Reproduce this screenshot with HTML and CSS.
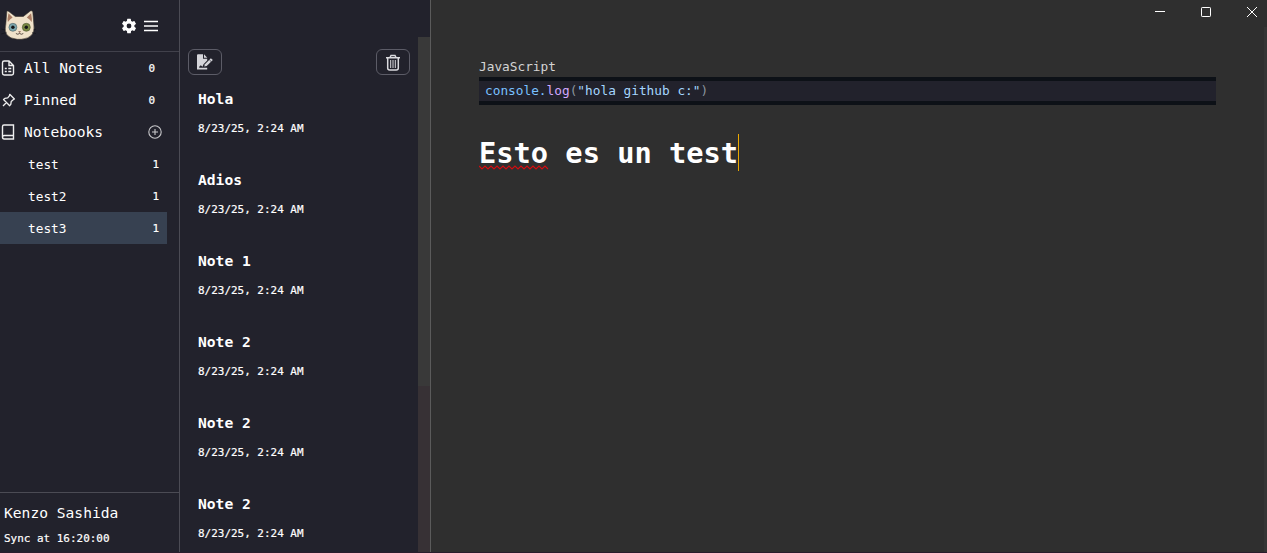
FILE: index.html
```html
<!DOCTYPE html>
<html lang="en">
<head>
<meta charset="utf-8">
<title>Notes</title>
<link rel="stylesheet" href="styles.css">
</head>
<body>
<div class="app">
  <aside class="sidebar">
    <header class="side-head">
      <svg class="logo" width="36" height="32" viewBox="0 0 36 32">
        <g transform="translate(-.7 0)">
        <path d="M6.500 14 L7.500 1.500 Q8 .5 9.500 1.500 L16 6.500 H24 L31 1 Q33 0 33.500 2 L34.500 14 Q37 28 22 29.300 H18 Q3 28 6.500 14Z" fill="#f0e2ca" stroke="#37302b" stroke-width=".6"/>
        <path d="M8.200 9 L9.200 3.300 L13.300 7.500 Q10.500 9 8.600 12Z M32.600 9 L31.800 3.300 L27.500 7.500 Q30.500 9 32.400 12Z" fill="#a97c63"/>
        <circle cx="13.600" cy="17.300" r="4" fill="#7ca7ad" stroke="#4f6264" stroke-width=".6"/>
        <circle cx="27" cy="17.300" r="4" fill="#7b8a42" stroke="#4c5430" stroke-width=".6"/>
        <circle cx="13.600" cy="17.300" r="1.700" fill="#151515"/><circle cx="27" cy="17.300" r="1.700" fill="#151515"/>
        <path d="M18.800 21.300h3L20.300 23Z" fill="#8c5f51"/>
        <path d="M16.600 23.500q2 1.500 3.700 0q1.800 1.500 3.700 0" fill="none" stroke="#3b302b" stroke-width=".8"/>
        <path d="M2 19l4 1M2 24l5-1.500M38 19l-4 1M38 24l-5-1.500" stroke="#111118" stroke-width=".6"/>
        </g>
      </svg>
      <div class="head-icons">
        <svg width="18" height="18" viewBox="0 0 24 24" fill="#fff"><path d="M19.140 12.940c.04-.3.060-.61.060-.94 0-.32-.02-.64-.07-.94l2.030-1.580a.49.490 0 0 0 .12-.61l-1.920-3.320a.49.490 0 0 0-.59-.22l-2.390.96c-.5-.38-1.030-.7-1.620-.94l-.36-2.540a.48.480 0 0 0-.48-.41h-3.840a.48.480 0 0 0-.47.41l-.36 2.540c-.59.240-1.130.57-1.620.94l-2.390-.96a.48.480 0 0 0-.59.220L2.740 8.870a.48.480 0 0 0 .12.610l2.030 1.580a7 7 0 0 0 0 1.880l-2.030 1.580a.49.490 0 0 0-.12.610l1.920 3.320c.12.220.37.290.59.220l2.390-.96c.5.380 1.030.7 1.620.94l.36 2.540c.05.240.24.410.48.410h3.840c.24 0 .44-.17.47-.41l.36-2.540c.59-.24 1.130-.56 1.620-.94l2.390.96c.22.080.47 0 .59-.22l1.920-3.320a.48.480 0 0 0-.12-.61zM12 15.200a3.200 3.200 0 1 1 0-6.400 3.200 3.200 0 0 1 0 6.400z"/></svg>
        <svg width="14" height="12" viewBox="0 0 14 12" stroke="#fff" stroke-width="1.500"><path d="M0 1.500h14M0 6h14M0 10.500h14"/></svg>
      </div>
    </header>
    <nav class="nav">
      <div class="row">
        <svg width="16" height="18" viewBox="0 0 16 18" fill="none" stroke="#eee" stroke-width="1.400"><path d="M9 2H4.200Q2.500 2 2.500 3.700v10.600Q2.500 16 4.200 16h7.600q1.700 0 1.700-1.700V6.500zM9 2v4.500h4.500"/><path d="M4.800 9.500h2m1.500 0h3M4.800 12.500h2m1.500 0h3"/></svg>
        <span>All Notes</span><b class="count">0</b>
      </div>
      <div class="row">
        <svg width="16" height="18" viewBox="0 0 16 18" fill="none" stroke="#eee" stroke-width="1.300" stroke-linejoin="round"><path d="M9.700 3.300l4.700 4.700-1.200.8-2 1.800-.4 2.800-1.100 1.300-6.200-6.200 1.300-1.100 2.900-.5 1.700-2zM6.500 11.500L3 15"/></svg>
        <span>Pinned</span><b class="count">0</b>
      </div>
      <div class="row">
        <svg width="16" height="18" viewBox="0 0 16 18" fill="none" stroke="#eee" stroke-width="1.400"><path d="M13.500 12.500V2H4Q2.500 2 2.500 3.500V14Q2.500 16 4.200 16h9.300v-3.500H4.200Q2.500 12.500 2.500 14.200"/></svg>
        <span>Notebooks</span>
        <svg class="plus" width="14" height="14" viewBox="0 0 14 14" fill="none" stroke="#c8c8cb" stroke-width="1.100"><circle cx="7" cy="7" r="6.200"/><path d="M7 4v6M4 7h6"/></svg>
      </div>
      <div class="row book"><span>test</span><b class="count">1</b></div>
      <div class="row book"><span>test2</span><b class="count">1</b></div>
      <div class="row book active"><span>test3</span><b class="count">1</b></div>
    </nav>
    <footer class="user"><div class="name">Kenzo Sashida</div><div class="sync">Sync at 16:20:00</div></footer>
  </aside>
  <section class="notes">
    <div class="notes-body">
      <div class="tools">
        <button class="tool"><svg width="18" height="16" viewBox="0 0 18 16"><path d="M1 1.200Q1 .3 2 .3h5v4.400h4.200v1.800L7.500 10.300l-1 2.500-1.700-1.500-1.600 1.500v1h8v1.800H1z" fill="#d5d5da"/><path d="M8 .3l3.300 3.500H8z" fill="#d5d5da"/><path d="M8.200 12.500l.7-2.300 6-6 1.900 1.700-6.100 6z" fill="#d5d5da"/><path d="M13.300 5.800l1.900 1.800" stroke="#22222c" stroke-width=".7"/></svg></button>
        <button class="tool"><svg width="16" height="17" viewBox="0 0 16 17" fill="none" stroke="#dadade" stroke-width="1.500"><path d="M1 3.800h14M5 3.500l1-2h4l1 2M2.700 4v10q0 2 2 2h6.600q2 0 2-2V4"/><path d="M5.700 6v8M8 6v8M10.300 6v8" stroke-width="1"/></svg></button>
      </div>
      <article class="note"><h2>Hola</h2><time>8/23/25, 2:24 AM</time></article>
      <article class="note"><h2>Adios</h2><time>8/23/25, 2:24 AM</time></article>
      <article class="note"><h2>Note 1</h2><time>8/23/25, 2:24 AM</time></article>
      <article class="note"><h2>Note 2</h2><time>8/23/25, 2:24 AM</time></article>
      <article class="note"><h2>Note 2</h2><time>8/23/25, 2:24 AM</time></article>
      <article class="note"><h2>Note 2</h2><time>8/23/25, 2:24 AM</time></article>
    </div>
    <div class="scroll"><div class="thumb"></div></div>
  </section>
  <main class="editor">
    <div class="controls">
      <svg width="10" height="10" viewBox="0 0 10 10" shape-rendering="crispEdges"><path d="M0 4.500h10" stroke="#fff"/></svg>
      <svg width="10" height="10" viewBox="0 0 10 10" fill="none" stroke="#fff"><rect x=".5" y=".5" width="9" height="9" rx=".7"/></svg>
      <svg width="10" height="10" viewBox="0 0 10 10" stroke="#fff"><path d="M0 0l10 10M10 0L0 10"/></svg>
    </div>
    <div class="lang">JavaScript</div>
    <pre class="code"><span class="obj">console.</span><span class="fn">log</span><span class="par">(</span><span class="str">"hola github c:"</span><span class="par">)</span></pre>
    <h1 class="title"><span class="miss">Esto<svg class="wave" width="70" height="5" viewBox="0 0 70 5" fill="none" stroke="#d40c10" stroke-width="1.100"><path d="M0 1l3 3 3-3 3 3 3-3 3 3 3-3 3 3 3-3 3 3 3-3 3 3 3-3 3 3 3-3 3 3 3-3 3 3 3-3 3 3 3-3 3 3 3-3 3 3"/></svg></span> es un test<i class="caret"></i></h1>
    <div class="edge"></div>
  </main>
</div>
</body>
</html>
```
FILE: styles.css
```css
* { box-sizing: border-box; }
body { margin: 0; background: #22222c; color: #fff; font-family: "DejaVu Sans Mono", monospace; font-size: 14.620px; overflow: hidden; }
svg { display: block; flex: none; }
.app { display: flex; width: 1267px; height: 553px; border-bottom: 1px solid #291d2c; }
.sidebar { width: 180px; flex: none; border-right: 1px solid #4b4b54; display: flex; flex-direction: column; }
.side-head { height: 52px; border-bottom: 1px solid #41414b; display: flex; justify-content: space-between; padding: 10px 21px 0 0; }
.head-icons { display: flex; align-items: center; gap: 6px; height: 32px; }
.nav { flex: 1; }
.row { height: 32px; display: flex; align-items: center; padding-right: 24px; line-height: 20px; }
.row span { margin-left: 8px; }
.count { margin-left: auto; padding-top: 2px; font-size: 10.960px; font-weight: 400; -webkit-text-stroke: .2px; }
.plus { margin-left: auto; margin-right: -7px; }
.book { width: 167px; font-size: 12.790px; padding-right: 8px; }
.book span { margin-left: 28px; padding-top: 2px; }
.active { background: #374151; }
.user { height: 60px; border-top: 1px solid #4b4b54; padding: 10px 4px; }
.name { line-height: 20px; }
.sync { font-size: 10.960px; line-height: 16px; margin-top: 8px; -webkit-text-stroke: .2px; }
.notes { width: 251px; flex: none; border-right: 1px solid #5b5b5b; display: flex; }
.notes-body { width: 238px; overflow: hidden; padding-top: 49px; }
.tools { display: flex; justify-content: space-between; padding: 0 8px; height: 26px; }
.tool { width: 34px; height: 26px; border: 1px solid #5c5c67; border-radius: 6px; background: transparent; padding: 0; display: flex; align-items: center; justify-content: center; }
.note { height: 81px; padding: 14px 18px 0; }
.note h2 { margin: 0; font-size: 14.620px; line-height: 20px; }
.note time { display: block; font-size: 10.960px; line-height: 16px; margin-top: 12px; -webkit-text-stroke: .2px; }
.scroll { width: 12px; margin-top: 37px; background: #373135; }
.thumb { height: 349px; background: #393939; }
.editor { flex: 1; min-width: 0; background: #2f2f2f; padding: 0 51px 0 48px; position: relative; }
.controls { display: flex; justify-content: flex-end; gap: 36px; height: 57px; padding-top: 7px; margin-right: -41px; }
.lang { font-size: 12.790px; line-height: 20px; color: #d4d4d4; }
.code { margin: 0; height: 28px; background: #22222c; border: solid #0d1117; border-width: 4px 0; padding: 0 6px; font: 12.790px/19px "DejaVu Sans Mono", monospace; }
.obj { color: #79c0ff; }
.fn { color: #d2a8ff; }
.par { color: #8b949e; }
.str { color: #a5d6ff; }
.title { margin: 29px 0 0; font-size: 28.700px; line-height: 39px; height: 37px; display: flex; white-space: pre; }
.miss { position: relative; }
.wave { position: absolute; left: 0; top: 31px; }
.caret { width: 1px; height: 37px; background: #eaa800; }
.edge { position: absolute; right: 0; top: 27px; bottom: 0; width: 3px; background: #353535; }
```
